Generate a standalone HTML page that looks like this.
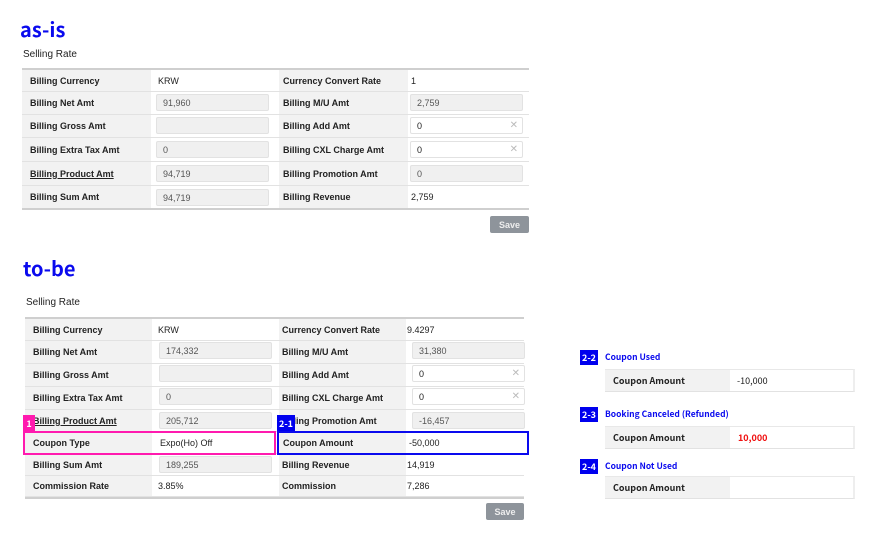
<!DOCTYPE html>
<html><head><meta charset="utf-8"><style>
*{margin:0;padding:0;box-sizing:border-box}
body{width:890px;height:545px;background:#fff;position:relative;overflow:hidden;font-family:"Liberation Sans",Arial,sans-serif;color:#222}
.a{position:absolute}
.h{font-family:"Noto Sans CJK KR","Liberation Sans",sans-serif;font-weight:700;color:#0a0aee;font-size:20px;line-height:20px}
.st{font-size:10px;color:#222}
.lab{background:#f2f2f2;font-weight:700;font-size:9px;display:flex;align-items:center;padding-left:8px;border-bottom:1px solid #e2e2e2;color:#222}
.val{background:#fff;font-size:9px;display:flex;align-items:center;padding-left:10px;border-bottom:1px solid #e2e2e2}
.inp{position:absolute;background:#f0f0f0;border:1px solid #e2e2e2;border-radius:2px;font-size:9px;color:#555;display:flex;align-items:center;padding-left:6px;height:17px}
.inp.w{background:#fff;color:#222}
.x{position:absolute;right:4px;color:#bbb;font-size:10px}
.tbtop{position:absolute;height:2px;background:#cfcfcf}
.save{position:absolute;background:#8e949b;color:#eee;font-size:9px;font-weight:700;display:flex;align-items:center;justify-content:center;border-radius:2px}
.tag{position:absolute;background:#0000ee;color:#fff;font-size:9px;font-weight:700;font-family:"Noto Sans CJK KR","Liberation Sans",sans-serif;display:flex;align-items:center;justify-content:center}
.bl{font-family:"Noto Sans CJK KR","Liberation Sans",sans-serif;font-weight:700;color:#0a0aee;font-size:8.5px}
.k{font-family:"Noto Sans CJK KR","Liberation Sans",sans-serif}
</style></head><body>

<div class="a h" style="left:20px;top:19px">as-is</div>
<div class="a st" style="left:23px;top:49px">Selling Rate</div>
<div class="tbtop" style="left:22px;top:68px;width:507px"></div>

<!-- as-is rows -->
<div class="a lab" style="left:22px;top:70px;width:129px;height:22px">Billing Currency</div>
<div class="a val" style="left:151px;top:70px;width:128px;height:22px;padding-left:7px">KRW</div>
<div class="a lab" style="left:279px;top:70px;width:129px;height:22px;padding-left:4px">Currency Convert Rate</div>
<div class="a val" style="left:408px;top:70px;width:121px;height:22px;padding-left:3px">1</div>

<div class="a lab" style="left:22px;top:92px;width:129px;height:23px">Billing Net Amt</div>
<div class="a val" style="left:151px;top:92px;width:128px;height:23px"></div>
<div class="a lab" style="left:279px;top:92px;width:129px;height:23px;padding-left:4px">Billing M/U Amt</div>
<div class="a val" style="left:408px;top:92px;width:121px;height:23px"></div>

<div class="a lab" style="left:22px;top:115px;width:129px;height:23px">Billing Gross Amt</div>
<div class="a val" style="left:151px;top:115px;width:128px;height:23px"></div>
<div class="a lab" style="left:279px;top:115px;width:129px;height:23px;padding-left:4px">Billing Add Amt</div>
<div class="a val" style="left:408px;top:115px;width:121px;height:23px"></div>

<div class="a lab" style="left:22px;top:138px;width:129px;height:24px">Billing Extra Tax Amt</div>
<div class="a val" style="left:151px;top:138px;width:128px;height:24px"></div>
<div class="a lab" style="left:279px;top:138px;width:129px;height:24px;padding-left:4px">Billing CXL Charge Amt</div>
<div class="a val" style="left:408px;top:138px;width:121px;height:24px"></div>

<div class="a lab" style="left:22px;top:162px;width:129px;height:24px;text-decoration:underline">Billing Product Amt</div>
<div class="a val" style="left:151px;top:162px;width:128px;height:24px"></div>
<div class="a lab" style="left:279px;top:162px;width:129px;height:24px;padding-left:4px">Billing Promotion Amt</div>
<div class="a val" style="left:408px;top:162px;width:121px;height:24px"></div>

<div class="a lab" style="left:22px;top:186px;width:129px;height:23px">Billing Sum Amt</div>
<div class="a val" style="left:151px;top:186px;width:128px;height:23px"></div>
<div class="a lab" style="left:279px;top:186px;width:129px;height:23px;padding-left:4px">Billing Revenue</div>
<div class="a val" style="left:408px;top:186px;width:121px;height:23px;padding-left:3px">2,759</div>
<div class="tbtop" style="left:22px;top:208px;width:507px"></div>

<div class="inp" style="left:156px;top:94px;width:113px">91,960</div>
<div class="inp" style="left:156px;top:117px;width:113px"></div>
<div class="inp" style="left:156px;top:141px;width:113px">0</div>
<div class="inp" style="left:156px;top:165px;width:113px">94,719</div>
<div class="inp" style="left:156px;top:189px;width:113px">94,719</div>
<div class="inp" style="left:410px;top:94px;width:113px">2,759</div>
<div class="inp w" style="left:410px;top:117px;width:113px">0<span class="x">✕</span></div>
<div class="inp w" style="left:410px;top:141px;width:113px">0<span class="x">✕</span></div>
<div class="inp" style="left:410px;top:165px;width:113px">0</div>
<div class="save" style="left:490px;top:216px;width:39px;height:17px">Save</div>

<!-- to-be -->
<div class="a h" style="left:23px;top:258px">to-be</div>
<div class="a st" style="left:26px;top:297px">Selling Rate</div>
<div class="tbtop" style="left:25px;top:317px;width:499px"></div>

<div class="a lab" style="left:25px;top:319px;width:127px;height:22px">Billing Currency</div>
<div class="a val" style="left:152px;top:319px;width:127px;height:22px;padding-left:6px">KRW</div>
<div class="a lab" style="left:279px;top:319px;width:127px;height:22px;padding-left:3px">Currency Convert Rate</div>
<div class="a val" style="left:406px;top:319px;width:118px;height:22px;padding-left:1px">9.4297</div>

<div class="a lab" style="left:25px;top:341px;width:127px;height:23px">Billing Net Amt</div>
<div class="a val" style="left:152px;top:341px;width:127px;height:23px"></div>
<div class="a lab" style="left:279px;top:341px;width:127px;height:23px;padding-left:3px">Billing M/U Amt</div>
<div class="a val" style="left:406px;top:341px;width:118px;height:23px"></div>

<div class="a lab" style="left:25px;top:364px;width:127px;height:23px">Billing Gross Amt</div>
<div class="a val" style="left:152px;top:364px;width:127px;height:23px"></div>
<div class="a lab" style="left:279px;top:364px;width:127px;height:23px;padding-left:3px">Billing Add Amt</div>
<div class="a val" style="left:406px;top:364px;width:118px;height:23px"></div>

<div class="a lab" style="left:25px;top:387px;width:127px;height:23px">Billing Extra Tax Amt</div>
<div class="a val" style="left:152px;top:387px;width:127px;height:23px"></div>
<div class="a lab" style="left:279px;top:387px;width:127px;height:23px;padding-left:3px">Billing CXL Charge Amt</div>
<div class="a val" style="left:406px;top:387px;width:118px;height:23px"></div>

<div class="a lab" style="left:25px;top:410px;width:127px;height:22px;text-decoration:underline">Billing Product Amt</div>
<div class="a val" style="left:152px;top:410px;width:127px;height:22px"></div>
<div class="a lab" style="left:279px;top:410px;width:127px;height:22px;padding-left:3px">Billing Promotion Amt</div>
<div class="a val" style="left:406px;top:410px;width:118px;height:22px"></div>

<div class="a lab" style="left:25px;top:432px;width:127px;height:22px">Coupon Type</div>
<div class="a val" style="left:152px;top:432px;width:127px;height:22px;padding-left:8px">Expo(Ho) Off</div>
<div class="a lab" style="left:279px;top:432px;width:127px;height:22px;padding-left:4px">Coupon Amount</div>
<div class="a val" style="left:406px;top:432px;width:118px;height:22px;padding-left:3px">-50,000</div>

<div class="a lab" style="left:25px;top:454px;width:127px;height:22px">Billing Sum Amt</div>
<div class="a val" style="left:152px;top:454px;width:127px;height:22px"></div>
<div class="a lab" style="left:279px;top:454px;width:127px;height:22px;padding-left:3px">Billing Revenue</div>
<div class="a val" style="left:406px;top:454px;width:118px;height:22px;padding-left:1px">14,919</div>

<div class="a lab" style="left:25px;top:476px;width:127px;height:21px">Commission Rate</div>
<div class="a val" style="left:152px;top:476px;width:127px;height:21px;padding-left:6px">3.85%</div>
<div class="a lab" style="left:279px;top:476px;width:127px;height:21px;padding-left:3px">Commission</div>
<div class="a val" style="left:406px;top:476px;width:118px;height:21px;padding-left:1px">7,286</div>
<div class="tbtop" style="left:25px;top:497px;width:499px"></div>

<div class="inp" style="left:159px;top:342px;width:113px">174,332</div>
<div class="inp" style="left:159px;top:365px;width:113px"></div>
<div class="inp" style="left:159px;top:388px;width:113px">0</div>
<div class="inp" style="left:159px;top:412px;width:113px">205,712</div>
<div class="inp" style="left:159px;top:456px;width:113px">189,255</div>
<div class="inp" style="left:412px;top:342px;width:113px">31,380</div>
<div class="inp w" style="left:412px;top:365px;width:113px">0<span class="x">✕</span></div>
<div class="inp w" style="left:412px;top:388px;width:113px">0<span class="x">✕</span></div>
<div class="inp" style="left:412px;top:412px;width:113px">-16,457</div>

<div class="a" style="left:23px;top:431px;width:253px;height:24px;border:2px solid #ff1aaf"></div>
<div class="tag" style="left:23px;top:415px;width:12px;height:16px;background:#ff1aaf">1</div>
<div class="a" style="left:277px;top:431px;width:252px;height:24px;border:2px solid #0a0aee"></div>
<div class="tag" style="left:277px;top:415px;width:18px;height:16px">2-1</div>

<div class="save" style="left:486px;top:503px;width:38px;height:17px">Save</div>

<!-- right side -->
<div class="tag" style="left:580px;top:350px;width:18px;height:15px">2-2</div>
<div class="a bl" style="left:605px;top:351px">Coupon Used</div>
<div class="a lab k" style="left:605px;top:369px;width:125px;height:23px;padding-left:8px;border-top:1px solid #e8e8e8">Coupon Amount</div>
<div class="a val k" style="left:730px;top:369px;width:125px;height:23px;padding-left:7px;border-top:1px solid #e8e8e8;border-right:2px solid #eee">-10,000</div>

<div class="tag" style="left:580px;top:407px;width:18px;height:15px">2-3</div>
<div class="a bl" style="left:605px;top:408px">Booking Canceled (Refunded)</div>
<div class="a lab k" style="left:605px;top:426px;width:125px;height:23px;padding-left:8px;border-top:1px solid #e8e8e8">Coupon Amount</div>
<div class="a val k" style="left:730px;top:426px;width:125px;height:23px;padding-left:8px;border-top:1px solid #e8e8e8;border-right:2px solid #eee;color:#f01010;font-weight:700">10,000</div>

<div class="tag" style="left:580px;top:459px;width:18px;height:15px">2-4</div>
<div class="a bl" style="left:605px;top:460px">Coupon Not Used</div>
<div class="a lab k" style="left:605px;top:476px;width:125px;height:23px;padding-left:8px;border-top:1px solid #e8e8e8">Coupon Amount</div>
<div class="a val k" style="left:730px;top:476px;width:125px;height:23px;border-top:1px solid #e8e8e8;border-right:2px solid #eee"></div>

</body></html>
